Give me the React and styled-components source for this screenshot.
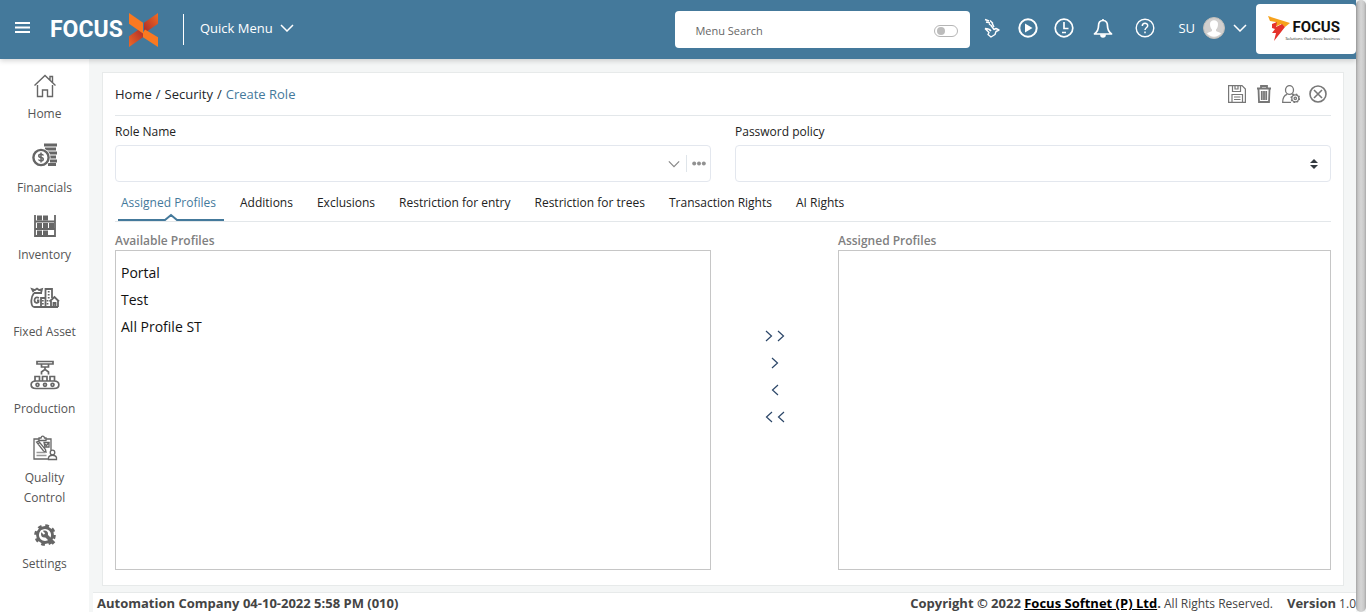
import React from "react";
import styled, { createGlobalStyle } from "styled-components";

const Global = createGlobalStyle`
  *, *::before, *::after { box-sizing: border-box; }
  body { margin: 0; background: #f4f6f6; color: #212529; font: 13px/20px "Open Sans", "Noto Sans", sans-serif; }
  button, input, select { font: inherit; color: inherit; }
  a { color: inherit; text-decoration: none; }
`;

const Shell = styled.div`
  display: flex;
  min-height: 100vh;
`;
const Page = styled.div`
  flex: 1;
  min-width: 0;
  display: flex;
  flex-direction: column;
`;
const ScrollTrack = styled.div`
  width: 10px;
  background: #f4f6f6;
`;
const ScrollThumb = styled.div`
  height: 100%;
  border-radius: 5px;
  background: linear-gradient(90deg, #a4a4a4 0, #c6c6c6 2px, #d6d6d6 5px, #c9c9c9 8px, #a9a9a9 10px);
`;

const Header = styled.header`
  height: 59px;
  display: flex;
  align-items: center;
  background: #44799b;
  color: #fff;
  box-shadow: 0 2px 5px rgba(0, 0, 0, 0.16);
  z-index: 1;
`;
const PlainButton = styled.button`
  display: flex;
  align-items: center;
  justify-content: center;
  padding: 0;
  border: 0;
  background: none;
  cursor: pointer;
`;
const MenuToggle = styled(PlainButton)`
  width: 45px;
  height: 54px;
  margin-bottom: 5px;
`;
const Brand = styled.a`
  display: flex;
  align-items: center;
  width: 138px;
  padding-left: 5px;
`;
const BrandName = styled.span`
  width: 79px;
  font: bold 23px/30px Roboto, sans-serif;
`;
const QuickMenu = styled(PlainButton)`
  height: 31px;
  margin-bottom: 1px;
  padding: 0 0 2px 16px;
  gap: 7px;
  border-left: 1px solid #fff;
`;
const HeaderRight = styled.div`
  flex: 1;
  display: flex;
  align-items: center;
  justify-content: flex-end;
  height: 100%;
  padding-bottom: 4px;
`;
const Search = styled.div`
  display: flex;
  align-items: center;
  width: 295px;
  height: 37px;
  margin: 4px 4px 0 0;
  padding: 0 12px 0 20px;
  border-radius: 4px;
  background: #fff;
`;
const SearchInput = styled.input`
  flex: 1;
  min-width: 0;
  padding: 2px 0 0;
  border: 0;
  outline: 0;
  background: none;
  color: #555;
  font-size: 11px;
  &::placeholder { color: #666; opacity: 1; }
`;
const Toggle = styled.input`
  appearance: none;
  display: flex;
  align-items: center;
  width: 24px;
  height: 12px;
  margin: 3px 0 0;
  padding-left: 2px;
  border: 1px solid #b5b5b5;
  border-radius: 6px;
  &::before { content: ""; width: 8px; height: 8px; border-radius: 4px; background: #bcbcbc; }
`;
const HeaderIcon = styled(PlainButton)`
  width: ${(p) => (p.$wide ? 42 : 36)}px;
  height: 40px;
  color: #fff;
`;
const UserMenu = styled(PlainButton)`
  gap: 8px;
  margin: 0 9px 0 12px;
  color: #fff;
`;
const CompanyLogo = styled.a`
  display: flex;
  align-items: center;
  width: 100px;
  height: 50px;
  margin-top: 3px;
  padding-left: 11px;
  border-radius: 4px;
  background: #fff;
  color: #111;
`;
const CompanyText = styled.span`
  display: flex;
  flex-direction: column;
  align-items: flex-end;
  width: 50px;
`;
const CompanyName = styled.span`
  font: bold 15px/18px Roboto, sans-serif;
`;
const Tagline = styled.span`
  font-size: 4px;
  line-height: 5px;
  white-space: nowrap;
`;
const Body = styled.div`
  flex: 1;
  display: flex;
`;
const Sidebar = styled.nav`
  width: 89px;
  flex-shrink: 0;
  background: #fff;
  font-size: 12px;
`;
const NavItem = styled.a`
  display: block;
  padding: 8px 8px 0;
  text-align: center;
  color: #555;
`;
const NavIcon = styled.span`
  display: flex;
  align-items: center;
  justify-content: center;
  height: ${(p) => p.$height}px;
  color: #666;
`;

const Column = styled.div`
  flex: 1;
  min-width: 0;
  display: flex;
  flex-direction: column;
`;
const Card = styled.main`
  flex: 1;
  display: flex;
  flex-direction: column;
  margin: 13px 12px 6px 13px;
  padding: 0 12px 15px;
  border: 1px solid #e7eaea;
  background: #fff;
`;
const CardHead = styled.div`
  display: flex;
  align-items: center;
  justify-content: space-between;
  height: 43px;
  border-bottom: 1px solid #e3e7ea;
`;
const Crumbs = styled.nav`
  display: flex;
  gap: 4px;
`;
const Current = styled.span`
  font-weight: 500;
  color: #44799b;
`;
const Actions = styled.div`
  display: flex;
  gap: 5px;
  padding-right: 2px;
`;
const Action = styled(PlainButton)`
  width: 22px;
  height: 22px;
  color: #777;
`;
const Fields = styled.div`
  display: grid;
  grid-template-columns: 1fr 1fr;
  gap: 24px;
  padding-top: 6px;
`;
const Field = styled.div`
  display: flex;
  flex-direction: column;
`;
const Label = styled.label`
  margin-bottom: 3px;
  font-size: 12px;
  font-weight: 500;
  color: #222;
`;
const Control = styled.div`
  display: flex;
  align-items: center;
  height: 37px;
  padding-right: ${(p) => p.$end}px;
  border: 1px solid #e3e7ee;
  border-radius: 4px;
  color: #888;
`;
const TextInput = styled.input`
  flex: 1;
  min-width: 0;
  height: 35px;
  padding: 0 8px;
  border: 0;
  outline: 0;
  background: none;
  color: #333;
`;
const Select = styled.select`
  appearance: none;
  flex: 1;
  height: 35px;
  padding: 0 8px;
  border: 0;
  outline: 0;
  background: none;
`;
const Divider = styled.span`
  width: 1px;
  height: 17px;
  margin: 0 5px 0 6px;
  background: #dfe5ea;
`;
const Tabs = styled.div`
  display: flex;
  gap: 13px;
  height: 40px;
  padding: 0 3px;
  border-bottom: 1px solid #e3e7ea;
`;
const Tab = styled.button`
  position: relative;
  padding: 4px 8px 0 3px;
  border: 0;
  border-bottom: 2px solid ${(p) => (p.$active ? "#44799b" : "transparent")};
  background: none;
  color: ${(p) => (p.$active ? "#44799b" : "#222")};
  font-size: 12px;
  font-weight: 500;
  white-space: nowrap;
`;
const Notch = styled.svg`
  position: absolute;
  left: calc(50% - 7px);
  bottom: -2px;
`;
const Transfer = styled.div`
  flex: 1;
  display: grid;
  grid-template-columns: 596fr 127fr 493fr;
  padding-top: 9px;
`;
const Pane = styled.section`
  display: flex;
  flex-direction: column;
`;
const PaneTitle = styled.h2`
  margin: 0;
  font-size: 12px;
  line-height: 19px;
  font-weight: 600;
  color: #808080;
`;
const List = styled.ul`
  flex: 1;
  min-height: 200px;
  margin: 0;
  padding: 8px 5px;
  border: 1px solid #c6c6c6;
  list-style: none;
  font-size: 14px;
  line-height: 27px;
  color: #111;
`;
const Movers = styled.div`
  display: flex;
  flex-direction: column;
  align-items: center;
  justify-content: center;
  padding-bottom: 48px;
`;
const Mover = styled(PlainButton)`
  width: 40px;
  height: 27px;
  gap: 4px;
`;
const Footer = styled.footer`
  display: flex;
  justify-content: space-between;
  height: 20px;
  margin-left: 4px;
  padding: 2px 0 0 4px;
  border-top: 1px solid #e7eaea;
  background: #fff;
  color: #444;
  font-size: 12px;
  line-height: 17px;
  b { font-size: 13px; font-weight: 700; }
  a { color: #000; text-decoration: underline; }
`;
const Legal = styled.span`
  display: flex;
  gap: 14px;
`;

const Svg = ({ w = 24, h = w, box, sw = 1.5, children }) => (
  <svg width={w} height={h} viewBox={box || `0 0 ${w} ${h}`} fill="none" stroke="currentColor" strokeWidth={sw} aria-hidden="true">
    {children}
  </svg>
);
const Chevron = ({ w = 14, sw = 1.5 }) => (
  <Svg w={w} h={8} box="0 0 14 8" sw={sw}><path d="M1 1l6 6 6-6" /></Svg>
);
const Arrow = ({ left }) => (
  <Svg w={8} h={12} sw={1.2}><path d={left ? "M7 1L1.500 6L7 11" : "M1 1L6.500 6L1 11"} stroke="#2b4668" /></Svg>
);

const HomeIcon = () => (
  <Svg w={24} sw={1.4}>
    <path d="M1.500 11.500L12 1.500l10.500 10M17 6V2.500h2.500v6M4.500 11v11.500h5V16h5v6.500h5V11" />
  </Svg>
);
const FinancialsIcon = () => (
  <Svg w={26} h={24}>
    <path d="M12 2h13M13 6h11M15 10h10M18 14h6M18 18h7M16 21.500h8" strokeWidth="2.800" />
    <circle cx="9" cy="14.500" r="9.500" fill="#fff" stroke="none" />
    <circle cx="9" cy="14.500" r="7.600" strokeWidth="2.400" />
    <path d="M11.500 12.500c-.5-1-1.400-1.300-2.500-1.300-3 0-3 3 0 3.300s3 3.300 0 3.300c-1.200 0-2-.4-2.500-1.300M9 9.500v10" strokeWidth="1.500" />
  </Svg>
);
const InventoryIcon = () => (
  <Svg w={24} sw={1.8}>
    <path d="M2 1v22M22 1v22M2 7.500h20M2 15h20M2 22h20" />
    <path d="M4 1.500h5v5H4zM10 1.500h5v5h-5zM4 9h5v5H4zM10 9h5v5h-5zM16 9h5v5h-5zM4 16.500h5v4.500H4zM10 16.500h5v4.500h-5z" fill="currentColor" stroke="none" />
  </Svg>
);
const AssetIcon = () => (
  <Svg w={30} h={22} sw={1.8}>
    <path d="M4 6C1 10 1 13 1.500 16c.3 3 1.500 4 3 4H28M4 6h8M3.500 5L2 2l3 1 2-1.500L9 3l3-1-1 4M15.500 20V2h6.500v9M11 20v-9h4" />
    <path d="M19.500 14.500l5-4.500 4.500 4.500M21 14v6M28 14v6M23.500 20v-4h2v4M9 11c-3-1.500-4.500 0-4.500 2.500 0 2.300 2.500 3 4 1.500v-1.500H7" />
    <path d="M18.700 4v8M12.800 13v5M17.500 13v5" strokeDasharray="1.500 1.500" />
  </Svg>
);
const ProductionIcon = () => (
  <Svg w={30} sw={1.7}>
    <path d="M7 1.500h16v2.500H7zM11.500 4v3h7V4M15 7v3.500M11.500 14.500V12L14 10h2l2.500 2v2.500" />
    <path d="M5 16.500h4.500V21H5zM12.500 16.500H17V21h-4.500zM20 16.500h4.500V21H20zM6 21h18c6.500 0 6.500 7.500 0 7.500H6c-6.500 0-6.500-7.500 0-7.500z" />
    <circle cx="7.500" cy="24.800" r="1.500" /><circle cx="15" cy="24.800" r="1.500" /><circle cx="22.500" cy="24.800" r="1.500" />
  </Svg>
);
const QualityIcon = () => (
  <Svg w={26} h={26} sw={1.3}>
    <path d="M16 24H2V4h5M14 4h5v11M7 5.500V3h2c.5-2.500 3-2.500 3.500 0H14v2.500z" />
    <path d="M4.500 20.500h10M4.500 17.500h9" stroke="#999" />
    <path d="M4.500 7l2-1 7 8.500.5 2.500-2.500-1zM6 9l2-2M12 7.500h5v4.500h-4zM13 9l1.500 1.500L17.500 7" />
    <circle cx="20.500" cy="17.500" r="2.300" />
    <path d="M16.500 24.500v-2c1-3 7-3 8 0v2z" />
  </Svg>
);
const SettingsIcon = () => (
  <Svg w={22} h={22}>
    <circle cx="11" cy="11" r="7.500" strokeWidth="2.800" />
    <circle cx="11" cy="11" r="9.300" strokeWidth="3" strokeDasharray="3.650 3.650" />
    <path d="M9 8.500l3.500 3.500M12.500 12L20 19.500" strokeWidth="3.600" />
    <circle cx="10.500" cy="10" r="3.500" fill="currentColor" stroke="none" />
    <path d="M7 6.500l3.500 3.500" stroke="#fff" strokeWidth="2" />
  </Svg>
);

const NAV = [
  ["Home", HomeIcon, 37],
  ["Financials", FinancialsIcon, 46],
  ["Inventory", InventoryIcon, 39],
  ["Fixed Asset", AssetIcon, 49],
  ["Production", ProductionIcon, 49],
  ["Quality Control", QualityIcon, 41],
  ["Settings", SettingsIcon, 38],
];
const TABS = ["Assigned Profiles", "Additions", "Exclusions", "Restriction for entry", "Restriction for trees", "Transaction Rights", "AI Rights"];
const PROFILES = ["Portal", "Test", "All Profile ST"];

const BrandMark = () => (
  <svg width="29" height="34" viewBox="0 0 29 35" preserveAspectRatio="none" aria-hidden="true">
    <defs>
      <linearGradient id="fold" x1="0" y1="1" x2="1" y2="0">
        <stop offset="0" stopColor="#ef6a26" /><stop offset="1" stopColor="#a8282a" />
      </linearGradient>
      <linearGradient id="foldTop" x1="0" y1="1" x2="1" y2="0">
        <stop offset="0" stopColor="#a8282a" /><stop offset="1" stopColor="#f06c22" />
      </linearGradient>
    </defs>
    <path d="M0 35V24l14-10v11z" fill="url(#fold)" />
    <path d="M15 21V10L29 0v11z" fill="url(#foldTop)" />
    <path d="M0 0l14 10v11L0 11z" fill="#fa7921" />
    <path d="M14 20l2-3 13 8v10L14 25z" fill="#fa7921" />
  </svg>
);
const FlagMark = () => (
  <svg width="23" height="26" viewBox="0 0 23 26" aria-hidden="true">
    <path d="M1 0l22 7-5 4-4-3-6 3 1-5-6-1z" fill="#f6a21d" />
    <path d="M5 8l5-2-1 5 6-3 3 3L7 25l2-8H5l3-4-3-1z" fill="#e5322b" />
  </svg>
);

export default function App() {
  return (
    <>
      <Global />
      <Shell>
        <Page>
          <Header>
            <MenuToggle aria-label="Toggle menu">
              <svg width="15" height="11" viewBox="0 0 15 11" stroke="#fff" strokeWidth="2"><path d="M0 1h15M0 5.500h15M0 10h15" /></svg>
            </MenuToggle>
            <Brand href="#" aria-label="Focus X">
              <BrandName>FOCUS</BrandName>
              <BrandMark />
            </Brand>
            <QuickMenu>Quick Menu <Chevron /></QuickMenu>
            <HeaderRight>
              <Search>
                <SearchInput placeholder="Menu Search" aria-label="Menu Search" />
                <Toggle type="checkbox" aria-label="Search mode" />
              </Search>
              <HeaderIcon aria-label="Assistant">
                <Svg w={16} h={20} sw={1.4}>
                  <path d="M1 1.500l4 1.500M2 4l4 1M6 2.500l3 3M5 6l3 2M8 5l2 4M1 10.500c3 0 5 1 6 2.500M1 10.500l4 4-1 2 3 2.500 4-2.500 1-3 3-1.500-3-1.500-2 1-3-4" strokeLinejoin="round" />
                </Svg>
              </HeaderIcon>
              <HeaderIcon aria-label="Play">
                <Svg w={20} sw={2}><circle cx="10" cy="10" r="8.700" /><path d="M7 5.500v9l7.500-4.500z" fill="currentColor" stroke="none" /></Svg>
              </HeaderIcon>
              <HeaderIcon aria-label="Recent">
                <Svg w={20} sw={1.7}><circle cx="10" cy="10" r="8.800" /><path d="M10 4v6.500h4.500M8 14.500h4" /></Svg>
              </HeaderIcon>
              <HeaderIcon $wide aria-label="Notifications">
                <Svg w={20} sw={1.7}><path d="M10 1v2M10 2.500C6.500 2.500 5.500 5 5.500 8c0 4-1.500 6-4 8h17c-2.500-2-4-4-4-8 0-3-1-5.500-4.500-5.500z" strokeLinejoin="round" /><path d="M8 17c0 2.500 4 2.500 4 0z" fill="currentColor" /></Svg>
              </HeaderIcon>
              <HeaderIcon $wide aria-label="Help">
                <Svg w={20} sw={1.4}><circle cx="10" cy="10" r="8.800" /><path d="M7.300 8c0-3.600 5.400-3.500 5.400-.3 0 2-2.700 2.200-2.700 4.300M10 13.500v1.700" strokeWidth="1.500" /></Svg>
              </HeaderIcon>
              <UserMenu>
                SU
                <svg width="22" height="22" viewBox="0 0 22 22" aria-hidden="true">
                  <circle cx="11" cy="11" r="10.500" fill="#d2d0cf" stroke="#c0beb9" />
                  <path d="M7 7c0-5 8-5 8 0 0 3-1 4.500-2 5.500v1.500c2 1 4 1.300 5 2.600A9.500 9.500 0 0 1 4 16.600c1-1.300 3-1.600 5-2.600v-1.500C8 11.500 7 10 7 7z" fill="#fff" />
                </svg>
                <Chevron />
              </UserMenu>
              <CompanyLogo href="#" aria-label="Focus">
                <FlagMark />
                <CompanyText>
                  <CompanyName>FOCUS</CompanyName>
                  <Tagline>Solutions that move business</Tagline>
                </CompanyText>
              </CompanyLogo>
            </HeaderRight>
          </Header>
          <Body>
            <Sidebar aria-label="Main">
              {NAV.map(([name, Icon, height]) => (
                <NavItem href="#" key={name}>
                  <NavIcon $height={height}><Icon /></NavIcon>
                  {name}
                </NavItem>
              ))}
            </Sidebar>
            <Column>
              <Card>
                <CardHead>
                  <Crumbs aria-label="Breadcrumb">
                    <a href="#">Home</a><span>/</span><a href="#">Security</a><span>/</span>
                    <Current aria-current="page">Create Role</Current>
                  </Crumbs>
                  <Actions>
                    <Action aria-label="Save">
                      <Svg w={18} sw={1.2}><path d="M.6.6h13.400l3.400 3.400v13.400H.6zM4.500.6v5.900h8V.6M7 .6v3.400h3V.6M4 17V9.500h10.500V17M6 12h6.500M6 14.500h6.500" /></Svg>
                    </Action>
                    <Action aria-label="Delete">
                      <Svg w={16} h={18} sw={1.8}><path d="M1 3.500h14M5 3V1h6v2M2.500 4l.5 13h10l.5-13M5.800 6v9M8 6v9M10.200 6v9" /></Svg>
                    </Action>
                    <Action aria-label="Role settings">
                      <Svg w={18} sw={1.3}>
                        <ellipse cx="7.500" cy="5" rx="4" ry="4.400" />
                        <path d="M9 17.300H.7c0-4 1-7 4.300-8M10 9l2 1" />
                        <circle cx="13.300" cy="13.300" r="3.500" /><circle cx="13.300" cy="13.300" r="1.200" />
                        <circle cx="13.300" cy="13.300" r="4.200" strokeDasharray="1.650 1.650" />
                      </Svg>
                    </Action>
                    <Action aria-label="Close">
                      <Svg w={18} sw={1.6}><circle cx="9" cy="9" r="8" /><path d="M5 5l8 8M13 5l-8 8" /></Svg>
                    </Action>
                  </Actions>
                </CardHead>
                <Fields>
                  <Field>
                    <Label htmlFor="role">Role Name</Label>
                    <Control $end={4}>
                      <TextInput id="role" />
                      <PlainButton aria-label="Show roles"><Chevron w={12} sw={1.4} /></PlainButton>
                      <Divider />
                      <PlainButton aria-label="More">
                        <svg width="14" height="5" viewBox="0 0 14 5" fill="#919191"><circle cx="2.200" cy="2.500" r="2" /><circle cx="7" cy="2.500" r="2" /><circle cx="11.800" cy="2.500" r="2" /></svg>
                      </PlainButton>
                    </Control>
                  </Field>
                  <Field>
                    <Label htmlFor="policy">Password policy</Label>
                    <Control $end={12}>
                      <Select id="policy"><option value="" aria-label="None" /></Select>
                      <svg width="8" height="10" viewBox="0 0 8 10" fill="#343a40" aria-hidden="true"><path d="M4 0l4 4H0zM4 10l4-4H0z" /></svg>
                    </Control>
                  </Field>
                </Fields>
                <Tabs role="tablist">
                  {TABS.map((t, i) => (
                    <Tab key={t} role="tab" aria-selected={i === 0} $active={i === 0}>
                      {t}
                      {i === 0 && (
                        <Notch width="14" height="8" viewBox="0 0 14 8">
                          <path d="M0 8V6l7-5 7 5v2z" fill="#fff" />
                          <path d="M0 7h1l6-5 6 5h1" fill="none" stroke="#44799b" strokeWidth="2" />
                        </Notch>
                      )}
                    </Tab>
                  ))}
                </Tabs>
                <Transfer>
                  <Pane>
                    <PaneTitle>Available Profiles</PaneTitle>
                    <List>{PROFILES.map((p) => <li key={p}>{p}</li>)}</List>
                  </Pane>
                  <Movers>
                    <Mover aria-label="Add all"><Arrow /><Arrow /></Mover>
                    <Mover aria-label="Add"><Arrow /></Mover>
                    <Mover aria-label="Remove"><Arrow left /></Mover>
                    <Mover aria-label="Remove all"><Arrow left /><Arrow left /></Mover>
                  </Movers>
                  <Pane>
                    <PaneTitle>Assigned Profiles</PaneTitle>
                    <List />
                  </Pane>
                </Transfer>
              </Card>
              <Footer>
                <b>Automation Company 04-10-2022 5:58 PM (010)</b>
                <Legal>
                  <span><b>Copyright © 2022 <a href="#">Focus Softnet (P) Ltd</a>.</b> All Rights Reserved.</span>
                  <span><b>Version</b> 1.0</span>
                </Legal>
              </Footer>
            </Column>
          </Body>
        </Page>
        <ScrollTrack><ScrollThumb /></ScrollTrack>
      </Shell>
    </>
  );
}
